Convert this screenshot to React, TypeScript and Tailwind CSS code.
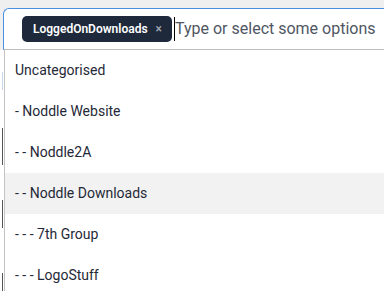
import React from 'react';

const options = [
  'Uncategorised',
  '- Noddle Website',
  '- - Noddle2A',
  '- - Noddle Downloads',
  '- - - 7th Group',
  '- - - LogoStuff',
];

export default function App() {
  return (
    <div className="w-[384px] h-[291px] overflow-hidden bg-white font-['Roboto',sans-serif]">
      <div className="bg-[#efefef] pt-2 pl-[3px]">
        <div className="h-[42px] bg-white border-t border-l border-[#4a90e2] rounded-tl-[6px] border-b border-b-[#bdbdbd] flex items-center pl-[18px] whitespace-nowrap">
          <span className="h-[26px] w-[150px] rounded-[5px] bg-[#1e293b] flex items-center pl-[11px] gap-[8px] text-white text-[12px] font-semibold">
            LoggedOnDownloads
            <span className="text-[#9ca3af] text-[12px] font-medium">×</span>
          </span>
          <span className="ml-[2px] w-px h-[24px] bg-black" />
          <span className="text-[16px] text-[#4f5663]">Type or select some options</span>
        </div>
      </div>

      <div className="flex">
        {/* edge of the page behind the dropdown */}
        <div className="w-[4px] flex flex-col pl-[2px]">
          <div className="h-[22px]" />
          <div className="w-px h-[18px] bg-[#c9d7ee]" />
          <div className="h-[38px]" />
          <div className="w-px h-[37px] bg-[#555]" />
          <div className="h-[35px]" />
          <div className="w-px h-[28px] bg-[#555]" />
          <div className="h-[45px]" />
          <div className="w-px h-[18px] bg-[#555]" />
        </div>
        <div className="flex-1 border-l border-[#c4c4c4] h-[260px]">
          {options.map((o) => (
            <div
              key={o}
              className={`h-[41px] flex items-center pl-[10px] text-[14px] text-[#1f2937] ${
                o === '- - Noddle Downloads' ? 'bg-[#f2f2f2]' : ''
              }`}
            >
              {o}
            </div>
          ))}
        </div>
      </div>
    </div>
  );
}
